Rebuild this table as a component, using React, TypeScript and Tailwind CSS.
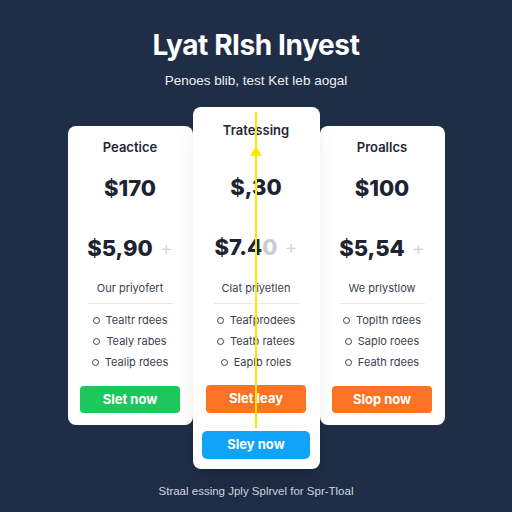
import React from 'react';

type Plan = {
  name: string;
  price: string;
  monthly: string;
  monthlyFaded?: string;
  note: string;
  features: string[];
  button: string;
  buttonClass: string;
};

const PLANS: Plan[] = [
  {
    name: 'Peactice',
    price: '$170',
    monthly: '$5,90',
    note: 'Our priyofert',
    features: ['Tealtr rdees', 'Tealy rabes', 'Tealip rdees'],
    button: 'Slet now',
    buttonClass: 'bg-[#1ec75c]',
  },
  {
    name: 'Tratessing',
    price: '$,30',
    monthly: '$7.4',
    monthlyFaded: '0',
    note: 'Clat priyetlen',
    features: ['Teafprodees', 'Teatb ratees', 'Eaplb roles'],
    button: 'Slet leay',
    buttonClass: 'bg-[#fb7325]',
  },
  {
    name: 'Proallcs',
    price: '$100',
    monthly: '$5,54',
    note: 'We prlystlow',
    features: ['Toplth rdees', 'Saplo roees', 'Feath rdees'],
    button: 'Slop now',
    buttonClass: 'bg-[#fb7325]',
  },
];

function Feature({ label }: { label: string }) {
  return (
    <li className="flex items-center justify-center gap-[6px] text-[11px] leading-[16px] text-[#3b4250]">
      <span className="block h-[7px] w-[7px] rounded-full border border-[#3b4250]" />
      {label}
    </li>
  );
}

function PlanBody({ plan, featured }: { plan: Plan; featured?: boolean }) {
  return (
    <>
      <h3 className="text-[13px] leading-[18px] font-semibold text-[#1f2633]">{plan.name}</h3>
      <div
        className={`${featured ? 'mt-[34px]' : 'mt-[18px]'} text-[22px] leading-[28px] font-extrabold text-[#1c2331]`}
      >
        {plan.price}
      </div>
      <div className="mt-[32px] flex items-center gap-[7px] text-[22px] leading-[28px] font-extrabold text-[#1c2331]">
        <span>
          {plan.monthly}
          {plan.monthlyFaded && <span className="text-[#c9ccd1]">{plan.monthlyFaded}</span>}
        </span>
        <span className="text-[20px] font-light text-[#cfd2d6]">+</span>
      </div>
      <p className={`${featured ? 'mt-[19px]' : 'mt-[18px]'} text-[11px] leading-[16px] text-[#3b4250]`}>
        {plan.note}
      </p>
      <div className="mt-[7px] h-px w-[85px] bg-[#e6e8ec]" />
      <ul className="mt-[8px] flex flex-col gap-[5px]">
        {plan.features.map((f) => (
          <Feature key={f} label={f} />
        ))}
      </ul>
    </>
  );
}

export default function App() {
  return (
    <div
      className="flex h-[512px] w-[512px] flex-col items-center bg-[#1f2d46] pt-[29px]"
      style={{ fontFamily: 'Inter, "Liberation Sans", sans-serif' }}
    >
      <h1 className="text-[28px] leading-[32px] font-bold tracking-[-0.4px] text-white">Lyat RIsh Inyest</h1>
      <p
        className="mt-[10px] text-[13.5px] leading-[20px] text-[#eef1f5]"
        style={{ fontFamily: '"Liberation Sans", Arial, sans-serif' }}
      >
        Penoes blib, test Ket leb aogal
      </p>

      <div className="mt-[16px] flex items-start">
        {/* Plan izquierdo */}
        <div className="mt-[19px] flex h-[299px] w-[125px] flex-col items-center rounded-[8px] bg-white pt-[12px]">
          <PlanBody plan={PLANS[0]} />
          <button className={`mt-[16px] h-[27px] w-[100px] rounded-[4px] text-[13px] font-bold text-white ${PLANS[0].buttonClass}`}>
            {PLANS[0].button}
          </button>
        </div>

        {/* Plan destacado */}
        <div className="relative z-10 flex h-[362px] w-[127px] flex-col items-center rounded-[8px] bg-white pt-[14px] shadow-xl">
          <PlanBody plan={PLANS[1]} featured />
          <button className={`mt-[15px] h-[28px] w-[100px] rounded-[4px] text-[13px] font-bold text-white ${PLANS[1].buttonClass}`}>
            {PLANS[1].button}
          </button>
          <button className="mt-[18px] h-[28px] w-[108px] rounded-[5px] bg-[#12a3f8] text-[13px] font-bold text-white">
            Sley now
          </button>

          {/* flecha amarilla */}
          <svg className="absolute left-[57px] top-[5px]" width="12" height="316" viewBox="0 0 12 316">
            <line x1="6" y1="0" x2="6" y2="316" stroke="#f7ea00" strokeWidth="2" />
            <polygon points="6,34 0,44 12,44" fill="#f7ea00" />
          </svg>
        </div>

        {/* Plan derecho */}
        <div className="mt-[19px] flex h-[299px] w-[125px] flex-col items-center rounded-[8px] bg-white pt-[12px]">
          <PlanBody plan={PLANS[2]} />
          <button className={`mt-[16px] h-[27px] w-[100px] rounded-[4px] text-[13px] font-bold text-white ${PLANS[2].buttonClass}`}>
            {PLANS[2].button}
          </button>
        </div>
      </div>

      <p
        className="mt-[14px] text-[11.5px] leading-[16px] text-[#d3d9e2]"
        style={{ fontFamily: '"Liberation Sans", Arial, sans-serif' }}
      >
        Straal essing Jply Splrvel for Spr-Tloal
      </p>
    </div>
  );
}
